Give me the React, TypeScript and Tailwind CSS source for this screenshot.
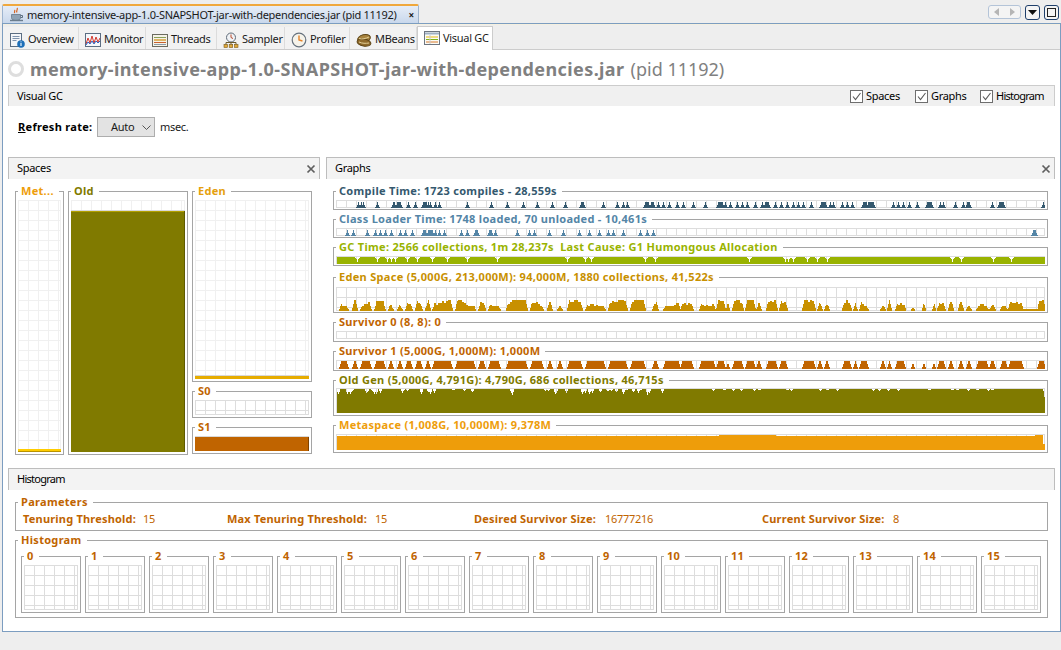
import type { ReactNode } from "react";

const FONT = "font-['Noto_Sans','Liberation_Sans',sans-serif]";

// zoomed crop coordinates -> chart columns
const a = (p: number) => Math.round(330 + p / 3 - 336);
const b = (p: number) => Math.round(690 + p / 3 - 336);
const WIDTH = 709;

function noise(seed: number) {
  let s = seed;
  return () => {
    s = (s * 16807) % 2147483647;
    return (s % 1000) / 1000;
  };
}

type Range = number | [number, number];

function fromSpikes(items: Range[], height: number) {
  const cols = new Array(WIDTH).fill(0);
  const put = (c: number, h: number) => {
    if (c >= 0 && c < WIDTH) cols[c] = Math.max(cols[c], h);
  };
  items.forEach((item) => {
    const [s, e] = typeof item === "number" ? [item, item] : item;
    for (let c = s; c <= e; c++) put(c, height);
    put(s - 1, Math.round(height * 0.5));
    put(e + 1, Math.round(height * 0.5));
    put(s - 2, 1);
    put(e + 2, 1);
  });
  return cols;
}

function fromNotches(items: number[], height: number, depth: number) {
  const cols = new Array(WIDTH).fill(height);
  items.forEach((c) => {
    [[0, depth], [1, 2], [-1, 2], [2, 1], [-2, 1]].forEach(([o, d]) => {
      if (c + o >= 0 && c + o < WIDTH) cols[c + o] = Math.min(cols[c + o], height - d);
    });
  });
  cols[0] = 0;
  return cols;
}

function fromSegments(items: [number, number][], max: number, min: number, seed: number) {
  const r = noise(seed);
  const cols = new Array(WIDTH).fill(0);
  items.forEach(([s, e]) => {
    let h = min + r() * (max - min);
    for (let c = s; c <= e && c < WIDTH; c++) {
      if (c % 2 === 0) h = Math.min(max, Math.max(min, h + (r() - 0.5) * 5));
      const edge = Math.min(c - s, e - c);
      const v = Math.round(h);
      cols[c] = edge === 0 ? Math.max(1, Math.round(v * 0.3)) : edge === 1 ? Math.round(v * 0.65) : v;
    }
  });
  return cols;
}

const COMPILE: Range[] = [
  a(85), a(92), a(100), a(140), [a(188), a(192)], [a(200), a(209)], a(235), a(255), [a(278), a(287)], a(295), a(300), a(315), a(328),
  a(410), a(483), a(530), a(578), a(620), a(665), a(705), [a(752), a(758)], a(818), a(862), a(878), a(892), [a(945), a(955)],
  [a(962), a(970)], a(985), a(1000), a(1018), a(1040), a(1060), b(10), b(45), [b(85), b(95)], b(105), b(120), b(140), b(155), b(172),
  b(195), b(215), [b(226), b(234)], b(255), b(272), b(290), b(310), b(325), b(340), b(363), [b(393), b(405)], b(420), b(430),
  b(455), b(470), b(485), [b(518), b(527)], [b(535), b(550)], b(610), b(625), b(640), b(658), b(682), [b(710), b(724)], b(750), b(760),
  b(795), b(820), [b(830), b(838)], b(905), [b(928), b(940)], b(1060),
];

const CLASSES: Range[] = [
  a(50), a(68), a(110), a(135), a(150), a(165), a(183), a(210), a(225), a(245), [a(278), a(285)], [a(295), a(305)], a(315), a(328), a(342),
  a(392), a(410), [a(434), a(440)], [a(478), a(484)], a(495), a(560), a(597), a(612), a(657), a(698), a(747), a(777), a(807),
  a(835), a(850), a(880), a(930), a(950), a(970), [b(1030), b(1036)],
];

const GC = [
  a(82), a(140), a(172), a(182), a(195), a(230), a(262), a(305), a(352), a(410), a(502), a(712), a(765), a(783), a(945), a(975),
  b(178), b(285), b(295), b(310), b(350), b(380), b(412), b(785), b(813), b(910), b(963),
];

const YOUNG: [number, number][] = [
  [a(28), a(55)], [a(65), a(80)], [a(90), a(122)], [a(132), a(165)], [a(175), a(190)], [a(200), a(215)], [a(225), a(245)], [a(255), a(275)],
  [a(285), a(300)], [a(305), a(365)], [a(375), a(435)], [a(445), a(465)], [a(475), a(510)], [a(528), a(590)], [a(600), a(640)], [a(650), a(665)],
  [a(680), a(695)], [a(712), a(755)], [a(765), a(825)], [a(835), a(890)], [a(900), a(945)], [a(965), a(985)], [a(1000), a(1050)], [b(-30), b(10)],
  [b(28), b(75)], [b(78), b(105)], [b(108), b(118)], [b(125), b(158)], [b(165), b(195)], [b(198), b(212)], [b(227), b(262)], [b(268), b(290)],
  [b(337), b(375)], [b(382), b(395)], [b(402), b(417)], [b(455), b(482)], [b(490), b(500)], [b(508), b(535)], [b(570), b(585)], [b(592), b(603)],
  [b(615), b(645)], [b(662), b(672)], [b(695), b(705)], [b(725), b(735)], [b(742), b(765)], [b(775), b(788)], [b(803), b(820)], [b(828), b(842)],
  [b(858), b(895)], [b(898), b(915)], [b(930), b(950)], [b(955), b(1000)], [b(1040), b(1065)],
];

function edenCols() {
  const cols = fromSegments(YOUNG, 11, 5, 77);
  for (let c = b(1000); c < b(1040); c++) cols[c] = 2;
  return cols;
}

function oldCols() {
  const r = noise(4242);
  const cols = new Array(WIDTH).fill(24);
  const cut = (c: number, d: number) => {
    if (c >= 0 && c < WIDTH) cols[c] = Math.min(cols[c], 24 - d);
  };
  for (let c = 0; c < WIDTH; c++) {
    const busy = c < 330 ? 0.13 : 0.05;
    if (r() < busy) {
      const d = 1 + Math.round(r() * (c < 330 ? 5 : 1));
      cut(c, d);
      cut(c - 1, Math.ceil(d / 2));
      cut(c + 1, Math.ceil(d / 2));
    }
  }
  cols[0] = 0;
  cols[WIDTH - 1] = 16;
  cols[WIDTH - 2] = 22;
  return cols;
}

function metaCols() {
  const cols = new Array(WIDTH).fill(14);
  for (let c = b(87); c < b(258); c++) cols[c] = 15;
  for (let c = b(1035); c < b(1060); c++) cols[c] = 15;
  for (let c = b(1060); c < WIDTH; c++) cols[c] = 6;
  cols[0] = 0;
  return cols;
}

function Chart({ w, h, grid = "#dddddd", cols, fill, children }: { w: number; h: number; grid?: string; cols?: number[]; fill?: string; children?: ReactNode }) {
  const id = `g${w}-${h}-${grid.slice(1)}`;
  const d = cols ? cols.map((v, i) => (v > 0 ? `M${i} ${h}V${h - v}h1V${h}z` : "")).join("") : "";
  return (
    <svg width={w} height={h} className="block" shapeRendering="crispEdges">
      <defs>
        <pattern id={id} width={10} height={10} patternUnits="userSpaceOnUse">
          <rect width={10} height={1} fill={grid} />
          <rect width={1} height={10} fill={grid} />
        </pattern>
      </defs>
      <rect width={w} height={h} fill={`url(#${id})`} />
      <rect x={w - 1} width={1} height={h} fill={grid} />
      <rect y={h - 1} width={w} height={1} fill={grid} />
      {d && <path d={d} fill={fill} />}
      {children}
    </svg>
  );
}

function Box({ title, color, className, children, legendClass = "" }: { title: string; color: string; className: string; children: ReactNode; legendClass?: string }) {
  return (
    <fieldset className={`border border-[#a5a5a5] min-w-0 ${className}`}>
      <legend className={`pl-[3px] pr-[5px] leading-[13px] h-[15px] font-bold text-[11px] tracking-[0.3px] whitespace-pre ${legendClass}`} style={{ color }}>
        {title}
      </legend>
      {children}
    </fieldset>
  );
}

function CloseX() {
  return (
    <svg width={10} height={10} viewBox="0 0 10 10" stroke="#5f5f5f" strokeWidth={1.7} className="shrink-0">
      <path d="M1.5 1.5l7 7M8.5 1.5l-7 7" />
    </svg>
  );
}

function PanelHeader({ title, close = false, tracking = "" }: { title: string; close?: boolean; tracking?: string }) {
  return (
    <div className="h-[22px] flex items-center justify-between bg-[#f3f3f3] border border-b-0 border-[#bdbdbd] pl-[8px] pr-[3px] text-[11px] text-black">
      <span className={tracking}>{title}</span>
      {close && <CloseX />}
    </div>
  );
}

function Check({ label, className }: { label: string; className: string }) {
  return (
    <div className={`flex items-center gap-[3px] ${className}`}>
      <svg width={13} height={13} viewBox="0 0 13 13" fill="none">
        <rect x={0.5} y={0.5} width={12} height={12} fill="#fff" stroke="#6e6e6e" />
        <path d="M3 6.5l2.5 3L10.5 3" stroke="#5a5a5a" strokeWidth={1.1} />
      </svg>
      <span>{label}</span>
    </div>
  );
}

function CoffeeIcon() {
  return (
    <svg width={16} height={16} viewBox="0 0 16 16" fill="none" className="shrink-0">
      <path d="M8 1c1.5 1.5-1.5 2.5 0 4.5M5.5 3c1 1-.8 1.8.3 3" stroke="#d9641e" strokeWidth={1.2} />
      <path d="M2.5 7.5h9v3c0 2-1.5 3-4.5 3s-4.5-1-4.5-3z" fill="#8fa3b5" stroke="#5d6f80" strokeWidth={0.7} />
      <path d="M11.5 8.5h2v2h-2" stroke="#5d6f80" />
      <path d="M1 13.5h13" stroke="#6b7d8e" strokeWidth={1.4} />
    </svg>
  );
}

const TAB_ICONS: Record<string, ReactNode> = {
  Overview: (
    <>
      <rect x={1.5} y={1.5} width={11} height={13} fill="#f4f6f9" stroke="#5b6d82" />
      <path d="M3.5 4.5h7M3.5 6.5h7M3.5 8.5h4" stroke="#7e93ad" />
      <circle cx={12} cy={12} r={3.8} fill="#1e6fb8" />
      <path d="M12 11v3M12 9.5v.8" stroke="#fff" strokeWidth={1.1} />
    </>
  ),
  Monitor: (
    <>
      <rect x={0.5} y={1.5} width={15} height={13} fill="#f5f7fb" stroke="#5b6d82" />
      <path d="M1 12l2-6 2 5 2-7 2 7 2-6 2 5 2-4" stroke="#d2372c" fill="none" />
      <path d="M1 13l2-3 2 2 2-3 2 3 2-3 2 2 2-2" stroke="#2d66c4" fill="none" />
    </>
  ),
  Threads: (
    <>
      <rect x={0.5} y={2.5} width={15} height={12} fill="#f5f3e8" stroke="#6b6b5f" />
      <path d="M2 5.5h12" stroke="#8aa05a" />
      <path d="M2 8h12" stroke="#d69a2e" strokeWidth={1.4} />
      <path d="M2 10.5h12" stroke="#c9622f" />
      <path d="M2 12.5h12" stroke="#8a9aa8" />
    </>
  ),
  Sampler: (
    <>
      <circle cx={8} cy={5.5} r={4.5} fill="#f0f2f5" stroke="#5f6b78" />
      <path d="M8 5.5V2.5M8 5.5l2 1" stroke="#b7482b" />
      <path d="M3 13V10.5h10V13M8 10v3" stroke="#6a5a2e" fill="none" />
      <rect x={1} y={12.5} width={3.5} height={3} fill="#e2a93a" stroke="#7a5a18" strokeWidth={0.6} />
      <rect x={6.2} y={12.5} width={3.5} height={3} fill="#e2a93a" stroke="#7a5a18" strokeWidth={0.6} />
      <rect x={11.5} y={12.5} width={3.5} height={3} fill="#e2a93a" stroke="#7a5a18" strokeWidth={0.6} />
    </>
  ),
  Profiler: (
    <>
      <circle cx={8} cy={8} r={6.8} fill="#f6f3ea" stroke="#66727e" strokeWidth={1.2} />
      <path d="M8 3.5V8l3.5 1" stroke="#e5832a" strokeWidth={1.4} fill="none" />
    </>
  ),
  MBeans: (
    <>
      <ellipse cx={8} cy={6.5} rx={6.5} ry={3.8} fill="#a8843e" stroke="#5e4517" transform="rotate(-14 8 6.5)" />
      <ellipse cx={8} cy={10.5} rx={7} ry={3.6} fill="#8f6a2b" stroke="#5e4517" transform="rotate(10 8 10.5)" />
      <path d="M3 6.5c3 1 7 0 10-1.5M3 10c3 1.5 7 1.5 10 1" stroke="#e3cf97" fill="none" />
    </>
  ),
  "Visual GC": (
    <>
      <rect x={0.5} y={1.5} width={15} height={13} fill="#fbfbf6" stroke="#6d7580" />
      <path d="M1 3.5h14" stroke="#9fb0c4" strokeWidth={2} />
      <path d="M2 7h12" stroke="#e8b80e" />
      <path d="M2 9.5h12" stroke="#7cb518" />
      <path d="M2 12h12" stroke="#d8782a" />
      <path d="M6 5v9" stroke="#cccccc" />
    </>
  ),
};

const TABS = [
  { label: "Overview", w: 76 },
  { label: "Monitor", w: 67 },
  { label: "Threads", w: 71 },
  { label: "Sampler", w: 68 },
  { label: "Profiler", w: 65 },
  { label: "MBeans", w: 67 },
];

function TabIcon({ name }: { name: string }) {
  return (
    <svg width={16} height={16} viewBox="0 0 16 16" className="shrink-0">
      {TAB_ICONS[name]}
    </svg>
  );
}

function Graph({ title, color, h, cols, pt, pb, frame, mt }: { title: string; color: string; h: number; cols?: number[]; pt: string; pb: string; frame: string; mt: string }) {
  return (
    <Box title={title} color={color} className={`w-[715px] px-[2px] ${frame} ${pt} ${pb} ${mt}`}>
      <Chart w={WIDTH} h={h} cols={cols} fill={color} />
    </Box>
  );
}

const TEXT_ORANGE = "#c06400";
const OLD = "#807a00";

export default function App() {
  return (
    <div className={`w-[1061px] h-[650px] bg-[#eeeeee] overflow-hidden flex flex-col text-[11px] tracking-[-0.3px] text-[#1a1a1a] ${FONT}`}>
      {/* Document tab strip */}
      <div className="h-[23px] pt-[4px] pl-[2px] pr-[2px] flex justify-between shrink-0">
        <div className="w-[417px] h-[19px] flex items-center pt-[1px] pl-[6px] pr-[4px] gap-[2px] rounded-t-[2px] border-t-2 border-t-[#f0a83c] border-x border-x-[#9db4cf] bg-gradient-to-b from-[#e6edf7] to-[#c9d8ec]">
          <CoffeeIcon />
          <span className="flex-1 whitespace-nowrap">memory-intensive-app-1.0-SNAPSHOT-jar-with-dependencies.jar (pid 11192)</span>
          <span className="font-bold text-[10px] leading-none">×</span>
        </div>
        <div className="flex items-start gap-[4px] pt-[1px]">
          <div className="w-[33px] h-[14px] rounded-[3px] border border-[#b4c4d8] bg-[#f4f4f4] flex items-center justify-around">
            <svg width={5} height={8} viewBox="0 0 5 8"><path d="M5 0v8L0 4z" fill="#b5b5b5" /></svg>
            <svg width={5} height={8} viewBox="0 0 5 8"><path d="M0 0v8l5-4z" fill="#b5b5b5" /></svg>
          </div>
          <div className="w-[15px] h-[15px] rounded-[3px] border border-[#1f3f6b] bg-[#f4f4f4] flex items-center justify-center">
            <svg width={9} height={5} viewBox="0 0 9 5"><path d="M0 0h9L4.5 5z" fill="#111" /></svg>
          </div>
          <div className="w-[15px] h-[15px] rounded-[3px] border border-[#1f3f6b] bg-[#f4f4f4] flex items-center justify-center">
            <div className="w-[9px] h-[9px] border border-[#222]" />
          </div>
        </div>
      </div>

      {/* Main window */}
      <div className="ml-[2px] w-[1059px] h-[609px] border border-[#7c9dc0] bg-white flex flex-col shrink-0">
        {/* View tabs */}
        <div className="h-[26px] bg-[#eeeeee] border-t border-t-[#f5f0e0] border-b border-b-[#cccccc] flex items-end shrink-0">
          {TABS.map((t) => (
            <div
              key={t.label}
              className="h-[22px] flex items-center gap-[3px] pt-[3px] pl-[6px] border-r border-[#dcdcdc] bg-[#f2f2f2] whitespace-nowrap"
              style={{ width: t.w }}
            >
              <TabIcon name={t.label} />
              <span>{t.label}</span>
            </div>
          ))}
          <div className="w-[76px] h-[24px] mb-[-1px] flex items-start pt-[3px] gap-[3px] pl-[6px] bg-white border border-b-0 border-[#cccccc] whitespace-nowrap">
            <TabIcon name="Visual GC" />
            <span>Visual GC</span>
          </div>
        </div>

        {/* Heading */}
        <div className="h-[35px] flex items-center pt-[3px] pl-[5px] gap-[6px] text-[#808080] text-[18px] tracking-normal whitespace-nowrap shrink-0">
          <div className="w-[16px] h-[16px] rounded-full border-[3px] border-[#dedede]" />
          <span className="font-bold tracking-[0.4px]">memory-intensive-app-1.0-SNAPSHOT-jar-with-dependencies.jar</span>
          <span>(pid 11192)</span>
        </div>

        <div className="pl-[5px] w-[1052px] flex flex-col">
          {/* Visual GC bar */}
          <div className="h-[21px] flex items-center bg-[#f0f0f0] border border-b-0 border-[#cccccc] pl-[8px] text-black">
            <span className="flex-1">Visual GC</span>
            <Check label="Spaces" className="w-[65px]" />
            <Check label="Graphs" className="w-[65px]" />
            <Check label="Histogram" className="w-[74px] tracking-[-0.75px]" />
          </div>

          {/* Refresh rate */}
          <div className="h-[51px] pt-[11px] pl-[10px] flex items-start">
            <div className="h-[20px] flex items-center font-bold tracking-[0.3px] text-black w-[79px] whitespace-nowrap">
              <span><span className="underline">R</span>efresh rate:</span>
            </div>
            <div className="w-[58px] h-[20px] border border-[#adadad] bg-[#e3e3e3] flex items-center pl-[13px] gap-[8px]">
              <span>Auto</span>
              <svg width={9} height={5} viewBox="0 0 9 5" fill="none" stroke="#555"><path d="M.5.5l4 4 4-4" /></svg>
            </div>
            <div className="h-[20px] flex items-center ml-[5px]">msec.</div>
          </div>

          {/* Spaces + Graphs */}
          <div className="flex gap-[6px] h-[311px]">
            <div className="w-[312px] shrink-0">
              <PanelHeader title="Spaces" close />
              <div className="pl-[7px] pt-[5px] flex gap-[4px]">
                <Box title="Met..." color="#ee9d0a" className="w-[49px] h-[271px] px-[2px] pt-[1px]" legendClass="pr-[1px]">
                  <Chart w={43} h={252} grid="#f0f0f0">
                    <rect y={249} width={43} height={3} fill="#ffcc00" />
                    <rect y={251} width={43} height={1} fill="#b89200" />
                  </Chart>
                </Box>
                <Box title="Old" color={OLD} className="w-[120px] h-[271px] px-[2px] pt-[1px]">
                  <Chart w={114} h={252} grid="#f0f0f0">
                    <rect y={11} width={114} height={241} fill={OLD} />
                    <rect y={10} width={114} height={1} fill="#d8d8d8" />
                    <rect y={11} width={114} height={1} fill="#b3a000" />
                    <rect x={113} y={11} width={1} height={241} fill="#5f5a00" />
                  </Chart>
                </Box>
                <div className="flex flex-col gap-[2px]">
                  <Box title="Eden" color="#e5a00d" className="w-[120px] h-[198px] px-[2px] pt-[1px]">
                    <Chart w={114} h={179} grid="#f0f0f0">
                      <rect y={176} width={114} height={3} fill="#e6ac00" />
                      <rect y={175} width={114} height={1} fill="#d8d8d8" />
                    </Chart>
                  </Box>
                  <Box title="S0" color={TEXT_ORANGE} className="w-[120px] h-[34px] px-[2px] pt-[1px]">
                    <Chart w={114} h={15} />
                  </Box>
                  <Box title="S1" color={TEXT_ORANGE} className="w-[120px] h-[34px] px-[2px] pt-[1px]">
                    <Chart w={114} h={15}>
                      <rect y={0} width={114} height={1} fill="#d8d8d8" />
                      <rect y={1} width={114} height={14} fill={TEXT_ORANGE} />
                      <rect x={113} y={1} width={1} height={14} fill="#7f4200" />
                    </Chart>
                  </Box>
                </div>
              </div>
            </div>

            <div className="w-[729px] shrink-0">
              <PanelHeader title="Graphs" close />
              <div className="pl-[7px] pt-[5px] flex flex-col">
                <Graph title="Compile Time: 1723 compiles - 28,559s" color="#34586e" h={8} cols={fromSpikes(COMPILE, 6)} pt="pt-[1px]" pb="pb-[1px]" frame="h-[26px]" mt="mt-0" />
                <Graph title="Class Loader Time: 1748 loaded, 70 unloaded - 10,461s" color="#5485a6" h={8} cols={fromSpikes(CLASSES, 6)} pt="pt-[1px]" pb="pb-[1px]" frame="h-[26px]" mt="mt-[2px]" />
                <Graph title="GC Time: 2566 collections, 1m 28,237s  Last Cause: G1 Humongous Allocation" color="#99b300" h={8} cols={fromNotches(GC, 7, 5)} pt="pt-[1px]" pb="pb-[1px]" frame="h-[26px]" mt="mt-[2px]" />
                <Graph title="Eden Space (5,000G, 213,000M): 94,000M, 1880 collections, 41,522s" color="#c89000" h={24} cols={edenCols()} pt="pt-[2px]" pb="pb-[1px]" frame="h-[43px]" mt="mt-[4px]" />
                <Graph title="Survivor 0 (8, 8): 0" color={TEXT_ORANGE} h={8} pt="pt-[1px]" pb="pb-[2px]" frame="h-[27px]" mt="mt-[2px]" />
                <Graph title="Survivor 1 (5,000G, 1,000M): 1,000M" color={TEXT_ORANGE} h={9} cols={fromSegments(YOUNG, 8, 8, 11)} pt="pt-[1px]" pb="pb-[1px]" frame="h-[27px]" mt="mt-[2px]" />
                <Graph title="Old Gen (5,000G, 4,791G): 4,790G, 686 collections, 46,715s" color={OLD} h={25} cols={oldCols()} pt="pt-0" pb="pb-[2px]" frame="h-[43px]" mt="mt-[2px]" />
                <Graph title="Metaspace (1,008G, 10,000M): 9,378M" color="#ee9d0a" h={16} cols={metaCols()} pt="pt-[1px]" pb="pb-[2px]" frame="h-[35px]" mt="mt-[2px]" />
              </div>
            </div>
          </div>

          {/* Histogram */}
          <PanelHeader title="Histogram" tracking="tracking-[-0.75px]" />
          <div className="pl-[7px] pt-[5px] flex flex-col gap-[2px]">
            <Box title="Parameters" color={TEXT_ORANGE} className="w-[1033px] h-[36px]" legendClass="ml-[2px]">
              <div className="flex pl-[7px] text-[#c06400] whitespace-nowrap h-[19px] items-center">
                <div className="w-[204px] flex"><b className="w-[120px] tracking-[0.2px]">Tenuring Threshold:</b><span>15</span></div>
                <div className="w-[247px] flex"><b className="w-[148px] tracking-[0.2px]">Max Tenuring Threshold:</b><span>15</span></div>
                <div className="w-[288px] flex"><b className="w-[131px] tracking-[0.2px]">Desired Survivor Size:</b><span>16777216</span></div>
                <div className="flex"><b className="w-[131px] tracking-[0.2px]">Current Survivor Size:</b><span>8</span></div>
              </div>
            </Box>
            <Box title="Histogram" color={TEXT_ORANGE} className="w-[1033px] h-[85px] pl-[5px] pt-[1px]" legendClass="ml-[-3px]">
              <div className="flex gap-[4px]">
                {Array.from({ length: 16 }, (_, i) => (
                  <Box key={i} title={String(i)} color={TEXT_ORANGE} className="w-[60px] h-[64px] px-[2px] pt-[1px]">
                    <Chart w={54} h={45} />
                  </Box>
                ))}
              </div>
            </Box>
          </div>
        </div>
      </div>
    </div>
  );
}
